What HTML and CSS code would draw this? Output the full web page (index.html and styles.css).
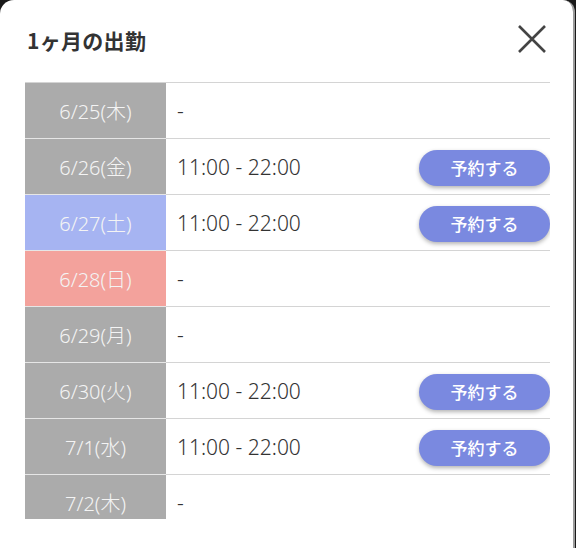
FILE: index.html
```html
<!DOCTYPE html>
<html lang="ja">
<head>
<meta charset="utf-8">
<link rel="stylesheet" href="styles.css">
</head>
<body>
<div class="modal">
  <div class="header">
    <h1 class="title">1ヶ月の出勤</h1>
    <button class="close" aria-label="閉じる">
      <svg width="30" height="30" viewBox="0 0 30 30"><path d="M2 2 L28 28 M28 2 L2 28" stroke="#444" stroke-width="2.6" fill="none"/></svg>
    </button>
  </div>
  <div class="scroll">
    <div class="table">
      <div class="row"><div class="date">6/25(木)</div><div class="cell"><span class="time">-</span></div></div>
      <div class="row"><div class="date">6/26(金)</div><div class="cell"><span class="time">11:00 - 22:00</span><button class="reserve">予約する</button></div></div>
      <div class="row"><div class="date sat">6/27(土)</div><div class="cell"><span class="time">11:00 - 22:00</span><button class="reserve">予約する</button></div></div>
      <div class="row"><div class="date sun">6/28(日)</div><div class="cell"><span class="time">-</span></div></div>
      <div class="row"><div class="date">6/29(月)</div><div class="cell"><span class="time">-</span></div></div>
      <div class="row"><div class="date">6/30(火)</div><div class="cell"><span class="time">11:00 - 22:00</span><button class="reserve">予約する</button></div></div>
      <div class="row"><div class="date">7/1(水)</div><div class="cell"><span class="time">11:00 - 22:00</span><button class="reserve">予約する</button></div></div>
      <div class="row"><div class="date">7/2(木)</div><div class="cell"><span class="time">-</span></div></div>
    </div>
  </div>
</div>
</body>
</html>
```
FILE: styles.css
```css
html, body {
  margin: 0;
  padding: 0;
  background: #1a1a1a;
  height: 548px;
  overflow: hidden;
}
body {
  font-family: "Noto Sans", "Noto Sans CJK JP", sans-serif;
}
.modal {
  width: 573px;
  height: 548px;
  background: #fff;
  border-radius: 14px 12px 0 0;
  border-right: 2px solid #9a9a9a;
  box-sizing: content-box;
}
.header {
  display: flex;
  align-items: center;
  justify-content: space-between;
  height: 82px;
  padding: 0 26px 0 27px;
  box-sizing: border-box;
}
.title {
  margin: 0;
  font-family: "Noto Sans CJK JP", sans-serif;
  font-size: 21px;
  font-weight: 700;
  color: #333;
  letter-spacing: 0.3px;
  padding-bottom: 2px;
}
.close {
  border: 0;
  background: none;
  padding: 0;
  width: 30px;
  height: 30px;
  margin-top: -4px;
}
.scroll {
  height: 437px;
  overflow: hidden;
  margin: 0 23px 0 25px;
}
.table {
  border-top: 1px solid #d4d4d4;
}
.row {
  display: flex;
  height: 56px;
  border-bottom: 1px solid #d4d4d4;
  box-sizing: border-box;
}
.date {
  width: 141px;
  flex: none;
  background: #ababab;
  color: #f4f4f4;
  font-size: 20px;
  font-weight: 300;
  display: flex;
  align-items: center;
  justify-content: center;
  border-bottom: 1px solid #e6e6e6;
  margin-bottom: -1px;
}
.date.sat { background: #a6b4f2; }
.date.sun { background: #f3a29c; }
.cell {
  flex: 1;
  display: flex;
  align-items: center;
  justify-content: space-between;
  padding: 0 0 0 11px;
}
.time {
  font-size: 21px;
  color: #333;
  font-weight: 300;
}
.reserve {
  width: 131px;
  height: 36px;
  border: 0;
  border-radius: 18px;
  background: #7a89e0;
  color: #fff;
  font-family: "Noto Sans CJK JP", sans-serif;
  font-size: 17px;
  font-weight: 500;
  box-shadow: 0 2px 4px rgba(0,0,0,0.3);
  margin-top: 2px;
}
```
